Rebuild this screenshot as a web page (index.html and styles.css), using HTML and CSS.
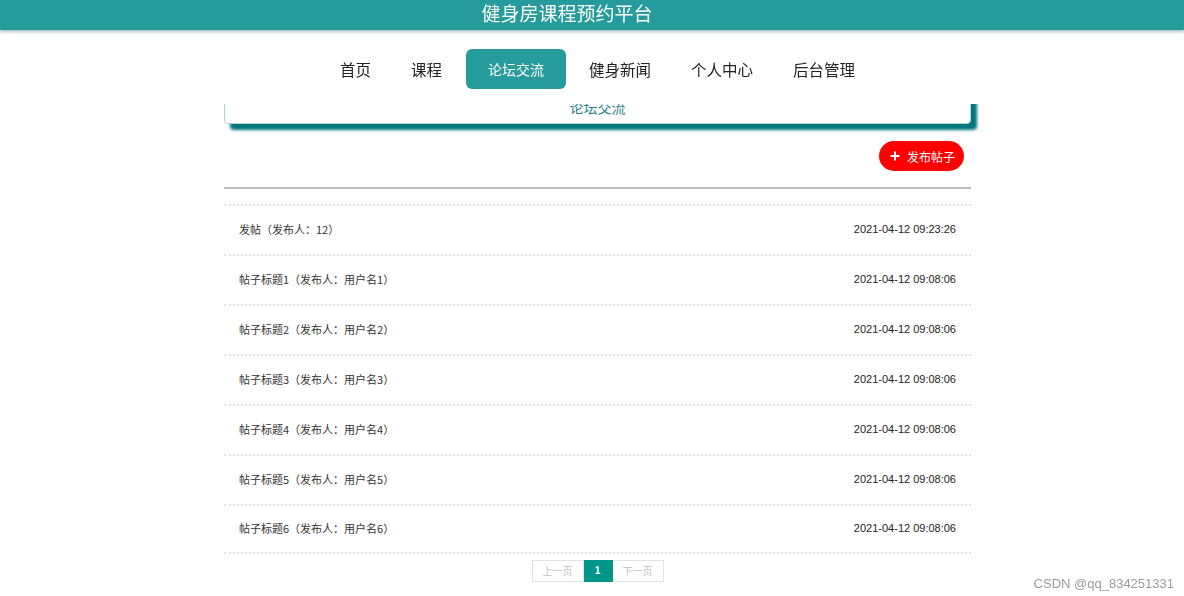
FILE: index.html
```html
<!DOCTYPE html>
<html lang="zh-CN">
<head>
<meta charset="utf-8">
<title>论坛交流</title>
<link rel="stylesheet" href="styles.css">
</head>
<body>
<header class="top">
  <div class="brand"><span class="brand-title">健身房课程预约平台</span></div>
  <nav class="nav">
    <a class="nav-item">首页</a>
    <a class="nav-item">课程</a>
    <a class="nav-item active">论坛交流</a>
    <a class="nav-item">健身新闻</a>
    <a class="nav-item">个人中心</a>
    <a class="nav-item">后台管理</a>
  </nav>
</header>

<main class="wrap">
  <div class="card"><span class="card-title">论坛交流</span></div>

  <div class="actions">
    <button class="btn-post">
      <svg class="plus" width="10" height="10" viewBox="0 0 10 10"><path d="M5 0.5V9.5M0.5 5H9.5" stroke="#fff" stroke-width="2" fill="none"/></svg>
      <span>发布帖子</span>
    </button>
  </div>

  <div class="sep"></div>

  <ul class="list">
    <li class="row"><span class="row-title">发帖（发布人：12）</span><span class="row-date">2021-04-12 09:23:26</span></li>
    <li class="row"><span class="row-title">帖子标题1（发布人：用户名1）</span><span class="row-date">2021-04-12 09:08:06</span></li>
    <li class="row"><span class="row-title">帖子标题2（发布人：用户名2）</span><span class="row-date">2021-04-12 09:08:06</span></li>
    <li class="row"><span class="row-title">帖子标题3（发布人：用户名3）</span><span class="row-date">2021-04-12 09:08:06</span></li>
    <li class="row"><span class="row-title">帖子标题4（发布人：用户名4）</span><span class="row-date">2021-04-12 09:08:06</span></li>
    <li class="row"><span class="row-title">帖子标题5（发布人：用户名5）</span><span class="row-date">2021-04-12 09:08:06</span></li>
    <li class="row"><span class="row-title">帖子标题6（发布人：用户名6）</span><span class="row-date">2021-04-12 09:08:06</span></li>
  </ul>

  <div class="pager">
    <span class="pg disabled">上一页</span>
    <span class="pg current">1</span>
    <span class="pg disabled">下一页</span>
  </div>
</main>

<div class="watermark">CSDN @qq_834251331</div>
</body>
</html>
```

FILE: styles.css
```css
* { box-sizing: border-box; }
html, body { margin: 0; padding: 0; }
body {
  background: #fff;
  font-family: "Noto Sans CJK SC", "Liberation Sans", sans-serif;
  color: #333;
  overflow: hidden;
}

.top {
  position: fixed;
  top: 0; left: 0; right: 0;
  height: 104px;
  background: #fff;
  z-index: 10;
}
.brand {
  height: 30px;
  background: #259b9b;
  box-shadow: 0 2px 3px rgba(80, 110, 130, 0.45);
  display: flex;
  justify-content: center;
  padding-right: 50px;
}
.brand-title {
  color: #fff;
  font-size: 19px;
  line-height: 25px;
}

.nav {
  display: flex;
  justify-content: center;
  padding: 19px 0 0 11px;
}
.nav-item {
  display: block;
  height: 40px;
  line-height: 40px;
  padding: 0 20px;
  font-size: 15.5px;
  color: #222;
}
.nav-item.active {
  background: #259b9b;
  color: #fff;
  border-radius: 6px;
  width: 100px;
  text-align: center;
  padding: 0;
  font-size: 14px;
  margin: 0 3px 0 4px;
}

.wrap {
  width: 747px;
  margin-left: calc(50% - 368px);
  padding-top: 64px;
}

.card {
  height: 60px;
  border: 1px solid #a9d6d6;
  border-radius: 4px;
  background: #fff;
  box-shadow: 6px 6px 3px #00767c;
  display: flex;
  align-items: flex-end;
  justify-content: center;
  padding-bottom: 8px;
}
.card-title {
  color: #2a7f8a;
  font-size: 14px;
  line-height: 16px;
}

.actions {
  display: flex;
  justify-content: flex-end;
  padding: 17px 7px 0 0;
}
.btn-post {
  height: 30px;
  width: 85px;
  border: none;
  border-radius: 15px;
  background: #ff0000;
  color: #fff;
  font-family: inherit;
  font-size: 12px;
  display: flex;
  align-items: center;
  justify-content: center;
  gap: 7px;
  padding: 0 0 0 2px;
}
.plus { display: block; }

.sep {
  margin-top: 16px;
  border-top: 2px solid #bcbcbc;
}

.list {
  list-style: none;
  margin: 15px 0 0;
  padding: 0;
}
.row {
  height: 50px;
  border-top: 2px dotted #e4e4e4;
  display: flex;
  align-items: center;
  justify-content: space-between;
  padding: 0 15px;
  font-size: 11px;
  color: #333;
}
.row:last-child { border-bottom: 2px dotted #e4e4e4; }
.row-title { padding-bottom: 2px; }
.row-date {
  font-family: "Liberation Sans", Arial, sans-serif;
  font-size: 11px;
  padding-bottom: 2px;
  color: #222;
}

.pager {
  display: flex;
  justify-content: center;
  margin-top: 6px;
}
.pg {
  height: 22px;
  line-height: 20px;
  border: 1px solid #e2e2e2;
  font-size: 10px;
  padding: 0 10px;
  color: #333;
  background: #fff;
}
.pg + .pg { border-left: none; }
.pg.disabled { color: #c2c2c2; }
.pg.current {
  background: #009688;
  border-color: #009688;
  color: #fff;
  font-weight: bold;
  width: 29px;
  padding: 0;
  text-align: center;
  font-family: "Liberation Sans", Arial, sans-serif;
}

.watermark {
  position: fixed;
  right: 10px;
  bottom: 5px;
  color: #9a9a9a;
  font-family: "Liberation Sans", Arial, sans-serif;
  font-size: 13px;
  z-index: 20;
}
```
